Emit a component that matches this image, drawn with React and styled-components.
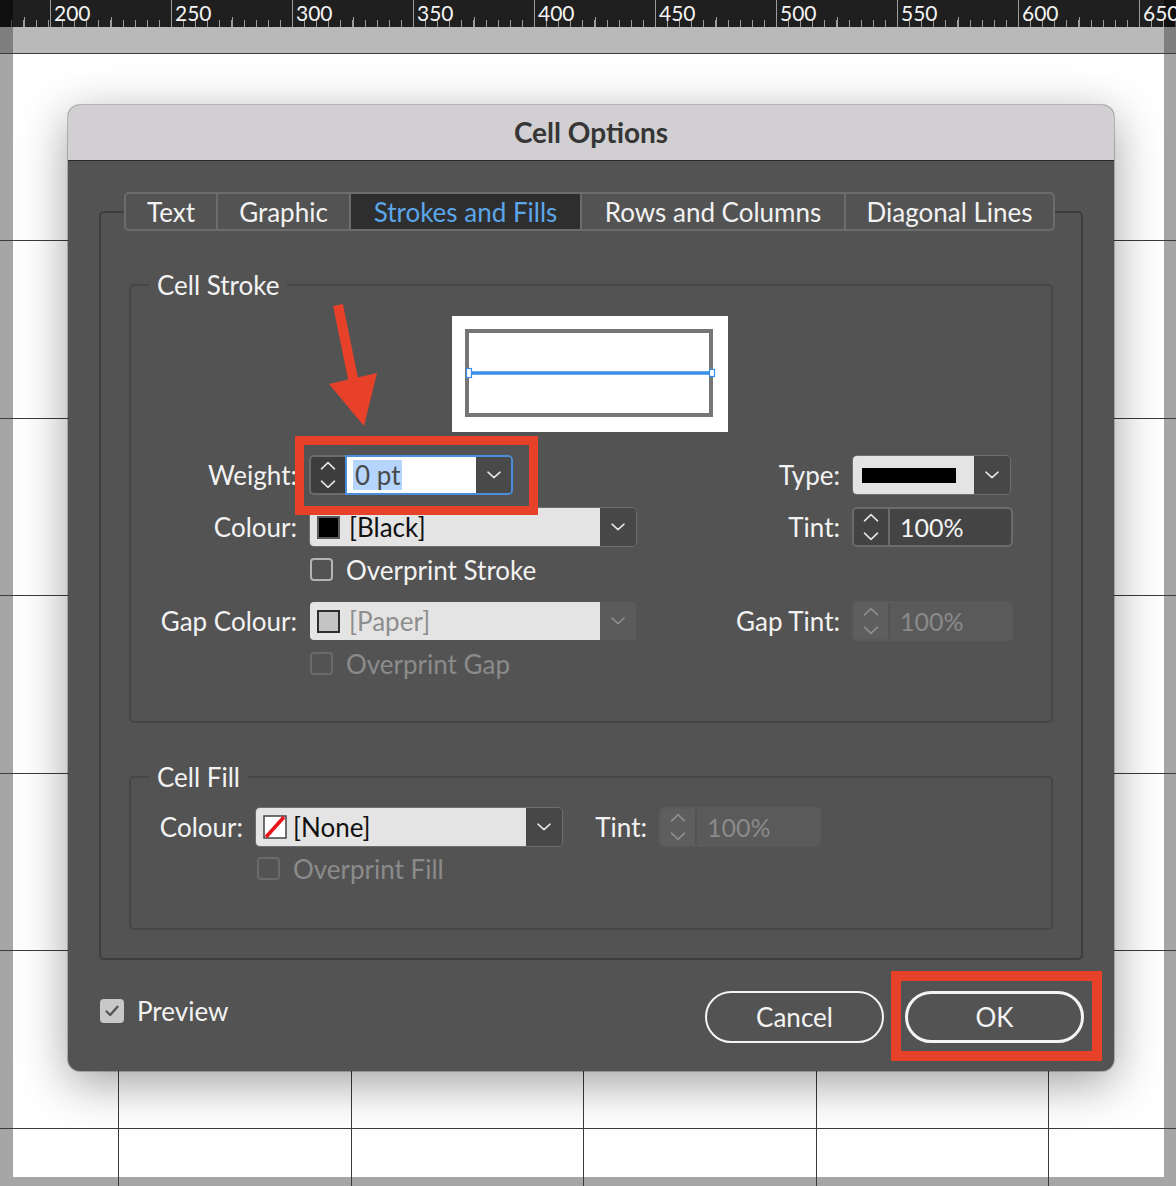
import React from "react";
import styled, { createGlobalStyle } from "styled-components";

const GlobalStyle = createGlobalStyle`
  html, body {
    margin: 0;
    padding: 0;
  }
  body {
    background: #a6a6a6;
    font-family: Lato, "Open Sans", sans-serif;
    overflow: hidden;
  }
  * {
    box-sizing: border-box;
  }
`;

const rulerLabels = [200, 250, 300, 350, 400, 450, 500, 550, 600, 650];
const tabs = [
  ["Text", 90],
  ["Graphic", 133],
  ["Strokes and Fills", 231],
  ["Rows and Columns", 264],
  ["Diagonal Lines", 209],
];

function Chevron({ color = "#e4e4e4" }) {
  return (
    <svg width="14" height="8" viewBox="0 0 14 8">
      <path
        d="M1 1.2 L7 6.6 L13 1.2"
        fill="none"
        stroke={color}
        strokeWidth="1.6"
        strokeLinecap="round"
        strokeLinejoin="round"
      />
    </svg>
  );
}

function SpinIcon({ color = "#e4e4e4" }) {
  return (
    <svg width="16" height="28" viewBox="0 0 16 28">
      <path
        d="M1.5 7.8 L8 1.6 L14.5 7.8"
        fill="none"
        stroke={color}
        strokeWidth="1.6"
        strokeLinecap="round"
        strokeLinejoin="round"
      />
      <path
        d="M1.5 20.2 L8 26.4 L14.5 20.2"
        fill="none"
        stroke={color}
        strokeWidth="1.6"
        strokeLinecap="round"
        strokeLinejoin="round"
      />
    </svg>
  );
}

function NoneSwatch() {
  return (
    <svg width="24" height="24" viewBox="0 0 24 24">
      <rect x="1" y="1" width="22" height="22" fill="#fff" stroke="#444" strokeWidth="1.5" />
      <path d="M3 22 L21 2" stroke="#e8141c" strokeWidth="3.6" />
    </svg>
  );
}

function CellPreview() {
  return (
    <svg width="276" height="116" viewBox="0 0 276 116">
      <rect x="0" y="0" width="276" height="116" fill="#fff" />
      <rect x="15" y="15" width="244" height="84" fill="#fff" stroke="#767676" strokeWidth="4" />
      <line x1="16" y1="57" x2="262" y2="57" stroke="#3a8fe8" strokeWidth="3.5" />
      <rect x="14.5" y="52.5" width="5" height="9" fill="#fff" stroke="#3a8fe8" strokeWidth="1.2" />
      <rect x="257.5" y="53.5" width="5" height="7" fill="#fff" stroke="#3a8fe8" strokeWidth="1.2" />
    </svg>
  );
}

function Check() {
  return (
    <svg width="16" height="14" viewBox="0 0 16 14">
      <path
        d="M2.5 7.5 L6.2 11 L13.5 2.8"
        fill="none"
        stroke="#555"
        strokeWidth="2.4"
        strokeLinecap="round"
        strokeLinejoin="round"
      />
    </svg>
  );
}

function App() {
  return (
    <>
      <GlobalStyle />
      <Screen>
        <Ruler>
          {rulerLabels.map((n) => (
            <RulerLabel key={n}>{n}</RulerLabel>
          ))}
        </Ruler>
        <Band />
        <Canvas>
          <Table>
            {Array.from({ length: 36 }).map((_, i) => (
              <Cell key={i} $first={i % 6 === 0} />
            ))}
          </Table>
        </Canvas>

        <Dialog>
          <TitleBar>Cell Options</TitleBar>

          <TabFrame>
            <TabBar>
              {tabs.map(([name, w], i) => (
                <Tab key={name} $w={w} $first={i === 0} $active={i === 2}>
                  {name}
                </Tab>
              ))}
            </TabBar>

            <Group $pt={16} $pb={46} $mt={39}>
              <Legend>Cell Stroke</Legend>
              <PreviewRow>
                <CellPreview />
              </PreviewRow>

              <StrokeRow $mt={23}>
                <Label>Weight:</Label>
                <WeightField>
                  <WeightSpin>
                    <SpinIcon />
                  </WeightSpin>
                  <WeightFocus>
                    <WeightInput>
                      <Selected>0 pt</Selected>
                    </WeightInput>
                    <WeightDrop>
                      <Chevron />
                    </WeightDrop>
                  </WeightFocus>
                </WeightField>
                <Label>Type:</Label>
                <Select $w={159}>
                  <SelectBody>
                    <LineSample />
                  </SelectBody>
                  <SelectButton>
                    <Chevron />
                  </SelectButton>
                </Select>
              </StrokeRow>

              <StrokeRow $mt={12}>
                <Label>Colour:</Label>
                <Select $w={328}>
                  <SelectBody>
                    <Swatch $color="#000" $border="#5a5a5a" />
                    [Black]
                  </SelectBody>
                  <SelectButton>
                    <Chevron />
                  </SelectButton>
                </Select>
                <Label>Tint:</Label>
                <Spin>
                  <SpinArrows>
                    <SpinIcon />
                  </SpinArrows>
                  <SpinValue>100%</SpinValue>
                </Spin>
              </StrokeRow>

              <CheckRow $mt={11} $indent={179}>
                <Box />
                <CheckText>Overprint Stroke</CheckText>
              </CheckRow>

              <StrokeRow $mt={20}>
                <Label>Gap Colour:</Label>
                <Select $w={328} $disabled>
                  <SelectBody $disabled>
                    <Swatch $color="#c4c4c4" $border="#2e2e2e" />
                    [Paper]
                  </SelectBody>
                  <SelectButton $disabled>
                    <Chevron color="#8c8c8c" />
                  </SelectButton>
                </Select>
                <Label>Gap Tint:</Label>
                <Spin $disabled>
                  <SpinArrows $disabled>
                    <SpinIcon color="#8e8e8e" />
                  </SpinArrows>
                  <SpinValue $disabled>100%</SpinValue>
                </Spin>
              </StrokeRow>

              <CheckRow $mt={11} $indent={179}>
                <Box $disabled />
                <CheckText $disabled>Overprint Gap</CheckText>
              </CheckRow>
            </Group>

            <Group $pt={15} $pb={48} $mt={39}>
              <Legend>Cell Fill</Legend>
              <FillRow>
                <Label>Colour:</Label>
                <Select $w={308}>
                  <SelectBody $gap={6}>
                    <NoneSwatch />
                    [None]
                  </SelectBody>
                  <SelectButton>
                    <Chevron />
                  </SelectButton>
                </Select>
                <Label>Tint:</Label>
                <Spin $disabled $w={162}>
                  <SpinArrows $disabled>
                    <SpinIcon color="#8e8e8e" />
                  </SpinArrows>
                  <SpinValue $disabled>100%</SpinValue>
                </Spin>
              </FillRow>
              <CheckRow $mt={10} $indent={126}>
                <Box $disabled />
                <CheckText $disabled>Overprint Fill</CheckText>
              </CheckRow>
            </Group>
          </TabFrame>

          <Footer>
            <PreviewToggle>
              <FilledBox>
                <Check />
              </FilledBox>
              <CheckText>Preview</CheckText>
            </PreviewToggle>
            <Buttons>
              <PillButton>Cancel</PillButton>
              <PillButton $primary>OK</PillButton>
            </Buttons>
          </Footer>

          <Highlight $x={227} $y={331} $w={243} $h={79} $t={9} />
          <Highlight $x={823} $y={866} $w={211} $h={90} $t={10} />
          <Arrow width="70" height="140" viewBox="0 0 70 140">
            <line x1="20" y1="10" x2="35.5" y2="86" stroke="#e8412a" strokeWidth="10" />
            <polygon points="11,89 59,78 46,131" fill="#e8412a" />
          </Arrow>
        </Dialog>
      </Screen>
    </>
  );
}

export default App;

const Screen = styled.div`
  position: relative;
  width: 1176px;
  height: 1186px;
  overflow: hidden;
`;

const Ruler = styled.div`
  height: 27px;
  display: flex;
  padding-left: 50px;
  overflow: hidden;
  background:
    linear-gradient(
      to right,
      rgba(0, 0, 0, 0.5) 0 13px,
      transparent 13px 1164px,
      rgba(0, 0, 0, 0.5) 1164px
    ),
    repeating-linear-gradient(to right, #9c9c9c 0 1px, transparent 1px 121px) 50px 0 / 100% 100% repeat-x,
    repeating-linear-gradient(to right, #9c9c9c 0 1px, transparent 1px 60.5px) 50px 100% / 100% 10px repeat-x,
    repeating-linear-gradient(to right, #9c9c9c 0 1px, transparent 1px 12.1px) 50px 100% / 100% 7px repeat-x,
    #1f1f1f;
`;

const RulerLabel = styled.span`
  flex: 0 0 121px;
  padding-left: 4px;
  font-size: 21px;
  line-height: 25px;
  color: #f4f4f4;
`;

const Band = styled.div`
  height: 27px;
  border-bottom: 1px solid #3d3d3d;
  background: linear-gradient(
    to right,
    #7f7f7f 0 13px,
    #b9b9b9 13px 1164px,
    #7f7f7f 1164px
  );
`;

const Canvas = styled.div`
  height: 1132px;
  overflow: hidden;
  background:
    linear-gradient(to bottom, transparent 1123px, #a6a6a6 1123px),
    linear-gradient(
      to right,
      #a6a6a6 0 13px,
      #ffffff 13px 1164px,
      #a6a6a6 1164px
    );
`;

const Table = styled.div`
  margin-top: 186px;
  display: grid;
  grid-template-columns: 118px 233px 232px 233px 232px 1fr;
  grid-auto-rows: 177.6px;
`;

const Cell = styled.div`
  border-top: 1px solid #3b3b3b;
  border-left: ${(p) => (p.$first ? "none" : "1px solid #3b3b3b")};
`;

const Dialog = styled.div`
  position: absolute;
  left: 68px;
  top: 105px;
  width: 1046px;
  height: 966px;
  display: flex;
  flex-direction: column;
  background: #535353;
  border-radius: 12px;
  box-shadow: 0 12px 48px rgba(0, 0, 0, 0.38), 0 0 0 1px rgba(0, 0, 0, 0.22);
  color: #f1f1f1;
`;

const TitleBar = styled.div`
  height: 56px;
  flex-shrink: 0;
  display: flex;
  align-items: center;
  justify-content: center;
  padding-bottom: 2px;
  background: #d1cfd1;
  border-bottom: 1px solid #2a2a2a;
  border-radius: 12px 12px 0 0;
  font-size: 28px;
  font-weight: 700;
  color: #363636;
`;

const TabFrame = styled.fieldset`
  margin: 31px 31px 0;
  padding: 0 0 28px;
  min-width: 0;
  border: 2px solid #3d3d3d;
  border-radius: 5px;
`;

const TabBar = styled.legend`
  margin-left: 23px;
  padding: 0;
  height: 39px;
  display: flex;
  border: 2px solid #6c6c6c;
  border-radius: 5px;
  overflow: hidden;
`;

const Tab = styled.div`
  width: ${(p) => p.$w}px;
  display: flex;
  align-items: center;
  justify-content: center;
  border-left: ${(p) => (p.$first ? "none" : "2px solid #6c6c6c")};
  background: ${(p) => (p.$active ? "#2e2e2e" : "transparent")};
  color: ${(p) => (p.$active ? "#5ba6ea" : "#f2f2f2")};
  font-size: 26px;
  white-space: nowrap;
`;

const Group = styled.fieldset`
  margin: ${(p) => p.$mt}px 28px 0;
  padding: ${(p) => p.$pt}px 38px ${(p) => p.$pb}px 0;
  min-width: 0;
  border: 2px solid #464646;
  border-radius: 5px;
`;

const Legend = styled.legend`
  margin-left: 18px;
  padding: 0 8px;
  font-size: 26px;
  line-height: 30px;
  color: #f2f2f2;
`;

const PreviewRow = styled.div`
  display: flex;
  padding-left: 321px;
  svg {
    display: block;
  }
`;

const StrokeRow = styled.div`
  margin-top: ${(p) => p.$mt}px;
  height: 40px;
  display: grid;
  grid-template-columns: 166px 328px 1fr 161px;
  column-gap: 12px;
  align-items: center;
`;

const FillRow = styled.div`
  height: 40px;
  display: grid;
  grid-template-columns: 112px 308px 72px 162px;
  column-gap: 12px;
  align-items: center;
`;

const Label = styled.span`
  text-align: right;
  font-size: 26px;
  white-space: nowrap;
  color: #f2f2f2;
`;

const Select = styled.div`
  width: ${(p) => p.$w}px;
  height: 40px;
  display: flex;
  border: 1px solid ${(p) => (p.$disabled ? "transparent" : "#6e6e6e")};
  border-radius: 5px;
  overflow: hidden;
`;

const SelectBody = styled.div`
  flex: 1;
  display: flex;
  align-items: center;
  gap: ${(p) => p.$gap || 9}px;
  padding-left: 7px;
  background: #e4e4e4;
  font-size: 26px;
  color: ${(p) => (p.$disabled ? "#8e8e8e" : "#111")};
  white-space: nowrap;
`;

const SelectButton = styled.div`
  width: 36px;
  display: flex;
  align-items: center;
  justify-content: center;
  background: ${(p) => (p.$disabled ? "#5b5b5b" : "#474747")};
`;

const Swatch = styled.span`
  width: 23px;
  height: 23px;
  flex-shrink: 0;
  background: ${(p) => p.$color};
  border: 2px solid ${(p) => p.$border};
`;

const LineSample = styled.span`
  width: 94px;
  height: 15px;
  margin-left: 2px;
  background: #000;
`;

const WeightField = styled.div`
  width: 204px;
  height: 40px;
  display: flex;
`;

const WeightSpin = styled.div`
  width: 36px;
  display: flex;
  align-items: center;
  justify-content: center;
  background: #3d3d3d;
  border: 2px solid #6b6b6b;
  border-right: none;
  border-radius: 5px 0 0 5px;
`;

const WeightFocus = styled.div`
  flex: 1;
  display: flex;
  border: 2px solid #4b8fdc;
  border-radius: 0 5px 5px 0;
  overflow: hidden;
`;

const WeightInput = styled.div`
  flex: 1;
  display: flex;
  align-items: center;
  padding-left: 6px;
  background: #fff;
`;

const Selected = styled.span`
  padding: 0 2px;
  line-height: 30px;
  background: #b5d5fd;
  font-size: 26px;
  color: #4a4a4a;
`;

const WeightDrop = styled.div`
  width: 35px;
  display: flex;
  align-items: center;
  justify-content: center;
  background: #494949;
`;

const Spin = styled.div`
  width: ${(p) => p.$w || 161}px;
  height: 40px;
  display: flex;
  border: 2px solid ${(p) => (p.$disabled ? "transparent" : "#6b6b6b")};
  border-radius: 5px;
  background: ${(p) => (p.$disabled ? "#5a5a5a" : "#444444")};
  overflow: hidden;
`;

const SpinArrows = styled.div`
  width: 36px;
  display: flex;
  align-items: center;
  justify-content: center;
  border-right: 2px solid ${(p) => (p.$disabled ? "#535353" : "#6b6b6b")};
  background: ${(p) => (p.$disabled ? "#5e5e5e" : "#434343")};
`;

const SpinValue = styled.div`
  flex: 1;
  display: flex;
  align-items: center;
  padding-left: 10px;
  font-size: 25px;
  color: ${(p) => (p.$disabled ? "#8a8a8a" : "#f4f4f4")};
`;

const CheckRow = styled.div`
  margin-top: ${(p) => p.$mt}px;
  padding-left: ${(p) => p.$indent}px;
  height: 23px;
  display: flex;
  align-items: center;
  gap: 13px;
`;

const Box = styled.span`
  width: 23px;
  height: 23px;
  flex-shrink: 0;
  border: 2px solid ${(p) => (p.$disabled ? "#6a6a6a" : "#b4b4b4")};
  border-radius: 4px;
`;

const CheckText = styled.span`
  font-size: 26px;
  white-space: nowrap;
  color: ${(p) => (p.$disabled ? "#8b8b8b" : "#f2f2f2")};
`;

const Footer = styled.div`
  margin-top: 31px;
  height: 52px;
  display: flex;
  align-items: center;
  justify-content: space-between;
  padding: 0 30px 0 32px;
`;

const PreviewToggle = styled.div`
  display: flex;
  align-items: center;
  gap: 13px;
  margin-top: -12px;
`;

const FilledBox = styled.span`
  width: 24px;
  height: 24px;
  display: flex;
  align-items: center;
  justify-content: center;
  background: #c8c8c8;
  border-radius: 4px;
`;

const Buttons = styled.div`
  display: flex;
  gap: 21px;
`;

const PillButton = styled.button`
  width: 179px;
  height: 52px;
  padding: 0;
  border: ${(p) => (p.$primary ? "3px" : "2px")} solid #f4f4f4;
  border-radius: 26px;
  background: transparent;
  font-family: Lato, "Open Sans", sans-serif;
  font-size: 26px;
  color: #f4f4f4;
`;

const Highlight = styled.div`
  position: absolute;
  left: ${(p) => p.$x}px;
  top: ${(p) => p.$y}px;
  width: ${(p) => p.$w}px;
  height: ${(p) => p.$h}px;
  border: ${(p) => p.$t}px solid #e8412a;
  pointer-events: none;
`;

const Arrow = styled.svg`
  position: absolute;
  left: 250px;
  top: 190px;
  pointer-events: none;
`;
